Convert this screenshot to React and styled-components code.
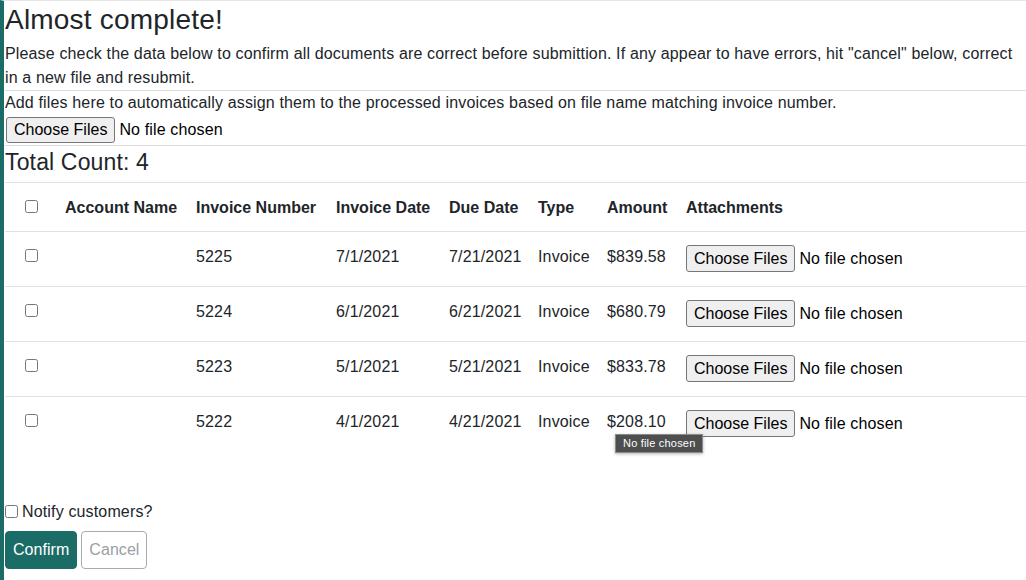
import React from "react";
import styled, { createGlobalStyle } from "styled-components";

const Global = createGlobalStyle`
  html, body { margin: 0; padding: 0; background: #fff; }
  body {
    font-family: "Liberation Sans", Arial, sans-serif;
    font-size: 16px;
    line-height: 24px;
    letter-spacing: 0.15px;
    color: #212529;
  }
  * { box-sizing: border-box; }
`;

const Page = styled.div`
  min-height: 580px;
  border-left: 4px solid #1b6b67;
  border-top: 1px solid #e6e6e6;
  padding-left: 1px;
`;

const Title = styled.h3`
  margin: 2px 0 5px;
  font-size: 28px;
  line-height: 34px;
  font-weight: 400;
  letter-spacing: 0.2px;
`;

const Para = styled.p`
  margin: 0;
`;

const Rule = styled.div`
  border-top: 1px solid #dcdcdc;
`;

const FileRow = styled.div`
  display: flex;
  align-items: center;
  gap: 4px;
  padding: 2px 0 2px 1px;
`;

const FileButton = styled.span`
  display: inline-flex;
  align-items: center;
  height: ${(p) => (p.$h ? p.$h : 26)}px;
  padding: 0 7px;
  background: #efefef;
  border: 1px solid #767676;
  border-radius: 3px;
  color: #000;
  font-size: 16px;
  letter-spacing: 0;
  white-space: nowrap;
`;

const FileText = styled.span`
  color: #000;
  white-space: nowrap;
`;

const Count = styled.h4`
  margin: 0;
  font-size: 23px;
  line-height: 28px;
  font-weight: 400;
  padding: 2px 0 6px;
`;

const Table = styled.table`
  width: 100%;
  border-collapse: collapse;
  table-layout: fixed;
  border-top: 1px solid #dee2e6;
`;

const HeadCell = styled.th`
  text-align: ${(p) => (p.$center ? "center" : "left")};
  font-weight: 700;
  letter-spacing: 0;
  padding: 13px 8px 11px;
  height: 48px;
  vertical-align: top;
  border-bottom: 1px solid #dee2e6;
  white-space: nowrap;
`;

const Row = styled.tr`
  border-bottom: ${(p) => (p.$last ? "none" : "1px solid #dee2e6")};
`;

const Cell = styled.td`
  text-align: ${(p) => (p.$center ? "center" : "left")};
  padding: 13px 8px 0;
  height: 55px;
  vertical-align: top;
  white-space: nowrap;
  position: relative;
`;

const Check = styled.span`
  display: inline-block;
  width: 13px;
  height: 13px;
  border: 1px solid #767676;
  border-radius: 2.5px;
  background: #fff;
  vertical-align: middle;
  margin-top: ${(p) => p.$mt || 0}px;
`;

const CheckWrap = styled.div`
  display: flex;
  justify-content: center;
  padding-top: 4px;
`;

const AttachBox = styled.div`
  display: flex;
  align-items: center;
  gap: 4px;
`;

const Tip = styled.div`
  position: absolute;
  left: -63px;
  top: 37px;
  background: #4e4e4e;
  border: 1px solid #8a8a8a;
  color: #fff;
  font-size: 11px;
  line-height: 17px;
  letter-spacing: 0.2px;
  padding: 0 6px 0 7px;
  white-space: nowrap;
  box-shadow: 0 1px 3px rgba(0,0,0,0.3);
  z-index: 2;
`;

const Notify = styled.label`
  display: flex;
  align-items: center;
  gap: 4px;
  margin-top: 48px;
`;

const Actions = styled.div`
  display: flex;
  gap: 4px;
  margin-top: 7px;
`;

const Btn = styled.button`
  font-family: inherit;
  font-size: 16px;
  line-height: 24px;
  letter-spacing: 0.05px;
  height: 38px;
  padding: 6px 7px;
  border-radius: 4px;
  cursor: pointer;
  ${(p) =>
    p.$primary
      ? `background:#1b6b67;border:1px solid #1b6b67;color:#fff;`
      : `background:#fff;border:1px solid #a7abb0;color:#9aa0a6;`}
`;

const rows = [
  { num: "5225", inv: "7/1/2021", due: "7/21/2021", amt: "$839.58" },
  { num: "5224", inv: "6/1/2021", due: "6/21/2021", amt: "$680.79" },
  { num: "5223", inv: "5/1/2021", due: "5/21/2021", amt: "$833.78" },
  { num: "5222", inv: "4/1/2021", due: "4/21/2021", amt: "$208.10" },
];

const widths = [52, 131, 140, 113, 89, 69, 79, null];

export default function App() {
  return (
    <>
      <Global />
      <Page>
        <Title>Almost complete!</Title>
        <Para>
          Please check the data below to confirm all documents are correct before submittion. If any
          appear to have errors, hit "cancel" below, correct in a new file and resubmit.
        </Para>
        <Rule />
        <Para>Add files here to automatically assign them to the processed invoices based on file name matching invoice number.</Para>
        <FileRow>
          <FileButton>Choose Files</FileButton>
          <FileText>No file chosen</FileText>
        </FileRow>
        <Rule />
        <Count>Total Count: 4</Count>
        <Table>
          <colgroup>
            {widths.map((w, i) => (
              <col key={i} style={w ? { width: w } : undefined} />
            ))}
          </colgroup>
          <thead>
            <tr>
              <HeadCell $center>
                <Check $mt={-4} />
              </HeadCell>
              <HeadCell>Account Name</HeadCell>
              <HeadCell>Invoice Number</HeadCell>
              <HeadCell>Invoice Date</HeadCell>
              <HeadCell>Due Date</HeadCell>
              <HeadCell>Type</HeadCell>
              <HeadCell>Amount</HeadCell>
              <HeadCell>Attachments</HeadCell>
            </tr>
          </thead>
          <tbody>
            {rows.map((r, i) => (
              <Row key={r.num} $last={i === rows.length - 1}>
                <Cell $center>
                  <CheckWrap>
                    <Check />
                  </CheckWrap>
                </Cell>
                <Cell />
                <Cell>{r.num}</Cell>
                <Cell>{r.inv}</Cell>
                <Cell>{r.due}</Cell>
                <Cell>Invoice</Cell>
                <Cell>{r.amt}</Cell>
                <Cell>
                  <AttachBox>
                    <FileButton $h={27}>Choose Files</FileButton>
                    <FileText>No file chosen</FileText>
                  </AttachBox>
                  {i === rows.length - 1 && <Tip>No file chosen</Tip>}
                </Cell>
              </Row>
            ))}
          </tbody>
        </Table>
        <Notify>
          <Check />
          <span>Notify customers?</span>
        </Notify>
        <Actions>
          <Btn $primary>Confirm</Btn>
          <Btn>Cancel</Btn>
        </Actions>
      </Page>
    </>
  );
}
